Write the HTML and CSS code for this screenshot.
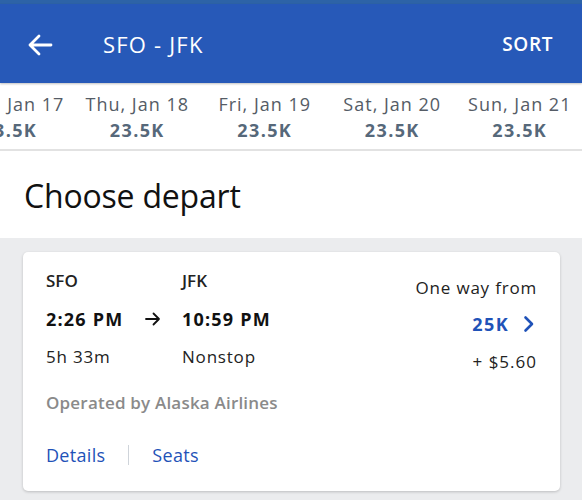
FILE: index.html
```html
<!DOCTYPE html>
<html>
<head>
<meta charset="utf-8">
<link rel="stylesheet" href="styles.css">
</head>
<body>
<div class="status"></div>
<header class="appbar">
  <svg class="back" width="26" height="22" viewBox="0 0 26 22"><path d="M24 11H3M12 2L3 11l9 9" fill="none" stroke="#fff" stroke-width="2.8" stroke-linecap="round" stroke-linejoin="round"/></svg>
  <div class="title">SFO - JFK</div>
  <div class="sort">SORT</div>
</header>
<div class="dates">
  <div class="date"><div class="d">Wed, Jan 17</div><div class="p">23.5K</div></div>
  <div class="date"><div class="d">Thu, Jan 18</div><div class="p">23.5K</div></div>
  <div class="date"><div class="d">Fri, Jan 19</div><div class="p">23.5K</div></div>
  <div class="date"><div class="d">Sat, Jan 20</div><div class="p">23.5K</div></div>
  <div class="date"><div class="d">Sun, Jan 21</div><div class="p">23.5K</div></div>
</div>
<h1 class="heading">Choose depart</h1>
<main class="list">
  <div class="card">
    <div class="info">
      <div class="grid">
        <div class="code">SFO</div><div></div><div class="code">JFK</div>
        <div class="time">2:26 PM</div>
        <svg class="arrow" width="16" height="14" viewBox="0 0 16 14"><path d="M1 7h13M8.5 1.5L14 7l-5.5 5.5" fill="none" stroke="#111" stroke-width="1.8" stroke-linecap="round" stroke-linejoin="round"/></svg>
        <div class="time">10:59 PM</div>
        <div class="meta">5h 33m</div><div></div><div class="meta">Nonstop</div>
      </div>
      <div class="operated">Operated by Alaska Airlines</div>
      <div class="links"><span class="link">Details</span><span class="sep"></span><span class="link">Seats</span></div>
    </div>
    <div class="price">
      <div class="from">One way from</div>
      <div class="miles">25K <svg class="chev" width="12" height="18" viewBox="0 0 12 18"><path d="M2.5 2.5L9 9l-6.5 6.5" fill="none" stroke="#1f52b8" stroke-width="2.6" stroke-linecap="round" stroke-linejoin="round"/></svg></div>
      <div class="fee">+ $5.60</div>
    </div>
  </div>
</main>
</body>
</html>
```
FILE: styles.css
```css
* { box-sizing: border-box; }
html, body { margin: 0; padding: 0; }
body {
  width: 582px;
  height: 500px;
  overflow: hidden;
  font-family: "Open Sans", "Noto Sans", sans-serif;
  background: #ebecee;
}
.status { height: 4px; background: #2d63a7; }
.appbar {
  height: 79px;
  background: #2759b8;
  display: flex;
  align-items: center;
  padding: 0 29px 0 27px;
  color: #fff;
  box-shadow: 0 1px 2px rgba(0,0,0,0.25);
  position: relative;
  z-index: 1;
}
.back { margin-top: 2px; }
.title { font-size: 22px; margin-left: 50px; flex: 1; letter-spacing: 1.2px; }
.sort { font-size: 19px; font-weight: 600; letter-spacing: 0.6px; }
.dates {
  background: #fff;
  display: flex;
  height: 68px;
  padding-top: 9px;
  border-bottom: 2px solid #e2e2e2;
  margin-left: -54px;
}
.date { flex: 0 0 127.5px; text-align: center; white-space: nowrap; }
.d { font-size: 18px; color: #555c66; line-height: 25px; letter-spacing: 1px; }
.p { font-size: 18px; font-weight: 700; color: #56687a; line-height: 26px; letter-spacing: 1.4px; }
.heading {
  margin: 0;
  background: #fff;
  height: 87px;
  font-size: 32px;
  font-weight: 400;
  color: #111;
  padding: 23px 0 0 24px;
  line-height: 44px;
  letter-spacing: -0.2px;
}
.list { padding: 14px 22px 0 23px; }
.card {
  background: #fff;
  border-radius: 5px;
  box-shadow: 0 1px 3px rgba(0,0,0,0.2);
  height: 239px;
  display: flex;
  justify-content: space-between;
  padding: 17px 23px 0 23px;
}
.grid {
  display: grid;
  grid-template-columns: 96px 40px auto;
  grid-template-rows: 24px 28px 28px;
  row-gap: 10px;
  align-items: center;
}
.code { font-size: 17px; font-weight: 600; color: #222; line-height: 24px; }
.time { font-size: 18px; font-weight: 700; color: #111; line-height: 28px; letter-spacing: 1.2px; margin-top: 4px; }
.arrow { margin-left: 3px; margin-top: 4px; }
.meta { font-size: 17px; color: #222; line-height: 28px; letter-spacing: 0.8px; margin-top: 4px; }
.operated { font-size: 17px; font-weight: 600; color: #8a8a8a; margin-top: 22px; line-height: 24px; letter-spacing: 0.2px; }
.links { display: flex; align-items: center; margin-top: 27px; }
.link { font-size: 18px; color: #1f52b8; line-height: 26px; letter-spacing: 0.3px; }
.sep { width: 1px; height: 20px; background: #cfd4da; margin: 0 23px 0 23px; }
.price { text-align: right; padding-top: 7px; }
.from { font-size: 17px; color: #222; line-height: 24px; letter-spacing: 0.8px; }
.miles { font-size: 18px; font-weight: 700; color: #1f52b8; line-height: 28px; margin-top: 10px; display: flex; align-items: center; justify-content: flex-end; gap: 14px; letter-spacing: 1.4px; }
.chev { margin-right: 2px; }
.fee { font-size: 17px; color: #222; line-height: 26px; margin-top: 11px; letter-spacing: 1px; }
```
